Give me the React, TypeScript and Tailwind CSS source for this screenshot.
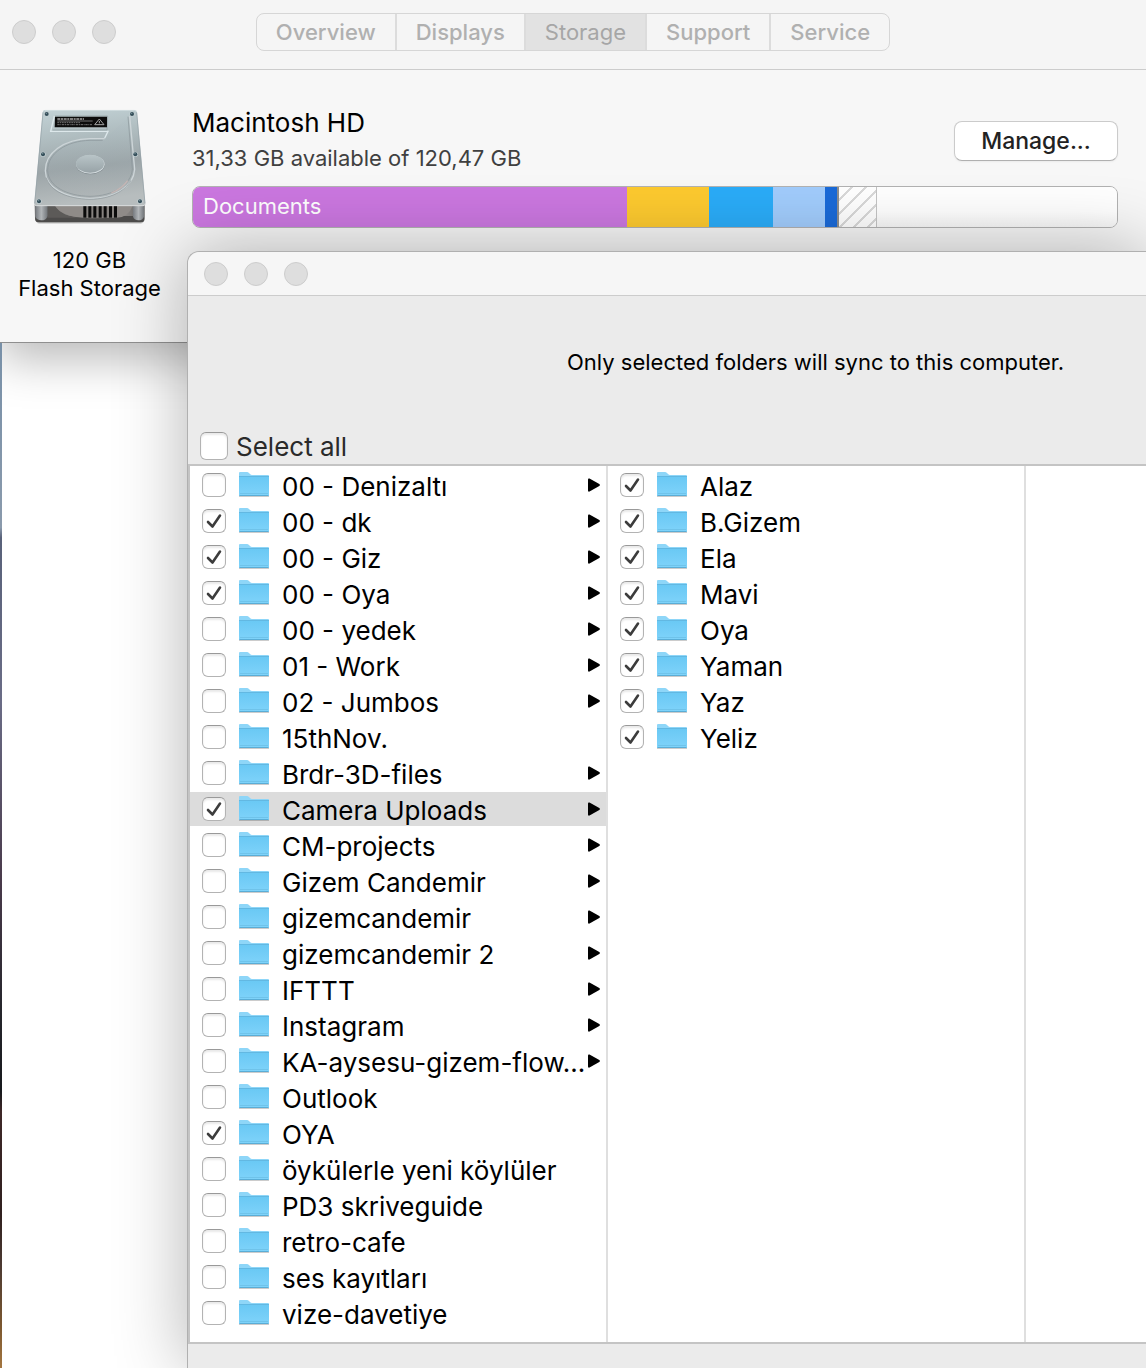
import { useState } from "react";

type Folder = { name: string; checked?: boolean; leaf?: boolean };

const tabs = ["Overview", "Displays", "Storage", "Support", "Service"];

const folders: Folder[] = [
  { name: "00 - Denizaltı" },
  { name: "00 - dk", checked: true },
  { name: "00 - Giz", checked: true },
  { name: "00 - Oya", checked: true },
  { name: "00 - yedek" },
  { name: "01 - Work" },
  { name: "02 - Jumbos" },
  { name: "15thNov.", leaf: true },
  { name: "Brdr-3D-files" },
  { name: "Camera Uploads", checked: true },
  { name: "CM-projects" },
  { name: "Gizem Candemir" },
  { name: "gizemcandemir" },
  { name: "gizemcandemir 2" },
  { name: "IFTTT" },
  { name: "Instagram" },
  { name: "KA-aysesu-gizem-flow..." },
  { name: "Outlook", leaf: true },
  { name: "OYA", checked: true, leaf: true },
  { name: "öykülerle yeni köylüler", leaf: true },
  { name: "PD3 skriveguide", leaf: true },
  { name: "retro-cafe", leaf: true },
  { name: "ses kayıtları", leaf: true },
  { name: "vize-davetiye", leaf: true },
];

const subfolders: Folder[] = ["Alaz", "B.Gizem", "Ela", "Mavi", "Oya", "Yaman", "Yaz", "Yeliz"].map(
  (name) => ({ name, checked: true, leaf: true }),
);

const usage = [
  { share: 434, look: "bg-[#cb77e0]", label: "Documents" },
  { share: 82, look: "bg-[#fdca2f]" },
  { share: 64, look: "bg-[#2aacf8]" },
  { share: 52, look: "bg-[#a1ccfc]" },
  { share: 12, look: "bg-[#1a6ad8] border-r-2 border-[#8e8e8e]" },
  {
    share: 37,
    look: "border-r border-[#c4c4c4] bg-[repeating-linear-gradient(135deg,#fff_0px,#fff_8px,#d9d9d9_8px,#d9d9d9_10px)]",
  },
  { share: 240, look: "bg-linear-to-b from-white from-60% to-[#f8f8f8]" },
];

function WindowButtons() {
  return (
    <div className="flex gap-4">
      {["Close", "Minimize", "Zoom"].map((label) => (
        <button
          key={label}
          aria-label={label}
          className="size-6 rounded-full border border-[#cdcdcd] bg-[#dedede]"
        />
      ))}
    </div>
  );
}

function DiskIcon() {
  return (
    <svg viewBox="90 48 360 360" className="size-[120px]" aria-hidden="true">
      <defs>
        <linearGradient id="lid" x1="0" y1="0" x2="0.15" y2="1">
          <stop offset="0" stopColor="#c3d3d7" />
          <stop offset="0.35" stopColor="#aebbbe" />
          <stop offset="0.65" stopColor="#9ca5a8" />
          <stop offset="1" stopColor="#b7bdbe" />
        </linearGradient>
        <linearGradient id="platter" x1="0" y1="0" x2="0" y2="1">
          <stop offset="0" stopColor="#b4c4c8" />
          <stop offset="0.6" stopColor="#9ba6aa" />
          <stop offset="1" stopColor="#aab0b2" />
        </linearGradient>
        <linearGradient id="base" x1="0" y1="0" x2="1" y2="0">
          <stop offset="0" stopColor="#6a6a6a" />
          <stop offset="0.3" stopColor="#767472" />
          <stop offset="0.45" stopColor="#a39f9c" />
          <stop offset="0.85" stopColor="#858280" />
          <stop offset="1" stopColor="#5a5a5a" />
        </linearGradient>
        <linearGradient id="post" x1="0" y1="0" x2="1" y2="0">
          <stop offset="0" stopColor="#777b80" />
          <stop offset="0.5" stopColor="#b1b5b8" />
          <stop offset="1" stopColor="#74787c" />
        </linearGradient>
        <linearGradient id="hub" x1="0" y1="0" x2="0" y2="1">
          <stop offset="0" stopColor="#b9c5c8" />
          <stop offset="1" stopColor="#98a3a7" />
        </linearGradient>
      </defs>
      <path d="M108 392 Q110 402 122 402 H416 Q430 402 432 392Z" fill="#000" opacity=".12" />
      <path d="M104 345 H434 V386 Q434 397 422 397 H117 Q105 397 105 386Z" fill="url(#base)" />
      <path d="M107 378 H432 V387 Q432 397 422 397 H117 Q107 397 106 387Z" fill="#4c4b4a" />
      <path d="M142 347 H165 Q185 378 235 383 H142Z" fill="#5c5a58" />
      <path d="M165 347 Q185 380 250 383 H350 Q385 382 398 347Z" fill="#8f8b88" />
      <path d="M106 347 H142 V380 Q138 391 124 391 Q110 390 106 380Z" fill="url(#post)" />
      <path d="M399 347 H432 V380 Q428 391 415 391 Q402 390 399 380Z" fill="url(#post)" />
      <path d="M250 347 H351 V381 Q300 387 250 383Z" fill="#86827f" />
      {[250, 265, 280, 296, 311, 327, 342].map((x) => (
        <path key={x} d={`M${x} 347 h9 v36 h-9Z`} fill="#0b0b0b" />
      ))}
      <path d="M135 60 H403 Q410 60 411 67 L436 340 Q436 348 429 348 H109 Q102 348 103 340 L128 67 Q129 60 135 60Z" fill="url(#lid)" />
      <path d="M135 61 H403 Q409 61 410 67" fill="none" stroke="#dce7ea" strokeWidth="2" />
      <path d="M104 343 Q105 347 110 347 H429 Q434 347 435 343" fill="none" stroke="#d9dcdd" strokeWidth="3" />
      <path d="M129 67 L104 340" fill="none" stroke="#93a0a6" strokeWidth="2" />
      <path d="M410 67 L435 340" fill="none" stroke="#93a0a6" strokeWidth="2" />
      <path d="M163 78 L152 124 H324 L314 145" fill="none" stroke="#dde8eb" strokeWidth="4" />
      <path d="M165 78 H323 L321 120 H158" fill="none" stroke="#8f9da1" strokeWidth="2" />
      <path
        d="M314 146 H270 C190 148 136 189 136 242 C137 294 196 324 270 326 C346 324 400 290 404 238 L389 78"
        fill="url(#platter)"
        fillOpacity=".4"
        stroke="#cdd5d8"
        strokeWidth="4"
      />
      <path
        d="M308 151 H270 C197 153 143 191 143 241 C144 289 201 318 270 319 C340 318 394 285 397 237 L384 80"
        fill="none"
        stroke="#899498"
        strokeWidth="2"
      />
      <path d="M139 263 C151 304 202 326 270 328 C332 327 376 303 393 271" fill="none" stroke="#8c9599" strokeWidth="2" />
      <path d="M334 309 Q365 297 383 272" fill="none" stroke="#c6b6b5" strokeWidth="4" />
      <ellipse cx="271" cy="225" rx="43" ry="28" fill="#7e888c" />
      <ellipse cx="271" cy="223" rx="43" ry="28" fill="#d2dadd" />
      <ellipse cx="270" cy="221" rx="42" ry="27" fill="url(#hub)" />
      <path d="M165 80 H321 V112 H164Z" fill="#0c0c0c" />
      <g stroke="#a4a4a4" fill="none">
        <path d="M172 87 H252" strokeWidth="4" strokeDasharray="9 2 6 2" />
        <path d="M172 93 H278" strokeWidth="2" />
        <path d="M172 98 H240" strokeWidth="2" strokeDasharray="5 2" />
        <path d="M172 104 H276" strokeWidth="2" strokeDasharray="7 2 3 2" />
        <path d="M298 87 L312 104 H284Z M298 93 V99 M298 101 V103" strokeWidth="3" />
      </g>
      {[
        [140, 72],
        [396, 72],
        [129, 193],
        [406, 193],
        [117, 334],
        [420, 334],
      ].map(([x, y]) => (
        <g key={`${x}-${y}`}>
          <circle cx={x} cy={y} r="8" fill="#c3cfd2" />
          <circle cx={x} cy={y} r="6" fill="#344e59" />
          <circle cx={x - 1} cy={y - 2} r="2" fill="#7f979f" />
        </g>
      ))}
    </svg>
  );
}

function FolderIcon() {
  return (
    <svg viewBox="0 0 32 28" className="h-7 w-8 shrink-0" aria-hidden="true">
      <defs>
        <linearGradient id="folder" x1="0" y1="0" x2="0" y2="1">
          <stop offset="0" stopColor="#69c8f4" />
          <stop offset="1" stopColor="#7fd3fa" />
        </linearGradient>
      </defs>
      <path d="M1 25.500H31" stroke="#000" strokeOpacity=".2" />
      <path d="M1 2 Q1 1 2 1 H9 Q10 1 11 2 L12 3 Q13 4 14 4 H30 Q31 4 31 5 V24 Q31 25 30 25 H2 Q1 25 1 24Z" fill="#8ed6f8" />
      <path d="M1 5 H31 V24 Q31 25 30 25 H2 Q1 25 1 24Z" fill="url(#folder)" />
      <path d="M1 5.500H31" stroke="#62b8e2" />
      <path d="M2 22.500H30" stroke="#6fc3ea" />
      <path d="M1.500 24.500H30.500" stroke="#5aadd6" />
    </svg>
  );
}

function CheckBox({ id, initial = false, large = false }: { id: string; initial?: boolean; large?: boolean }) {
  const [on, setOn] = useState(initial);
  return (
    <span className="grid shrink-0 place-items-center">
      <input
        id={id}
        type="checkbox"
        checked={on}
        onChange={() => setOn(!on)}
        className={`peer col-start-1 row-start-1 appearance-none rounded-md border border-[#b3b3b3] border-t-[#999] bg-white shadow-[inset_0_2px_2px_#e9e9e9] ${
          large ? "size-7" : "size-6"
        }`}
      />
      <svg
        viewBox="0 0 24 24"
        className="pointer-events-none invisible col-start-1 row-start-1 size-6 peer-checked:visible"
        fill="none"
        stroke="#3c3c3c"
        strokeWidth="2.600"
        strokeLinecap="round"
        strokeLinejoin="round"
        aria-hidden="true"
      >
        <path d="M6 13L10.500 17.500L18 6.500" />
      </svg>
    </span>
  );
}

function FolderColumn({ items, prefix, selected }: { items: Folder[]; prefix: string; selected?: string }) {
  return (
    <ul className="flex w-[418px] shrink-0 flex-col gap-0.5 border-r-2 border-[#dfdfdf] pt-0.5">
      {items.map((item, i) => (
        <li
          key={item.name}
          className={`flex h-[34px] items-center pr-1.5 pl-3 ${item.name === selected ? "bg-[#dcdcdc]" : ""}`}
        >
          <CheckBox id={`${prefix}-${i}`} initial={item.checked} />
          <label htmlFor={`${prefix}-${i}`} className="flex min-w-0 flex-1 items-center gap-3 pl-3">
            <FolderIcon />
            <span className="pt-1 text-[26px] leading-[30px] whitespace-nowrap">{item.name}</span>
          </label>
          {!item.leaf && (
            <svg viewBox="0 0 12 14" className="h-3.5 w-3 shrink-0" aria-hidden="true">
              <path d="M0 1.500 Q0 0 1.500 .5 L11.300 6 Q12.500 7 11.300 8 L1.500 13.500 Q0 14 0 12.500Z" />
            </svg>
          )}
        </li>
      ))}
    </ul>
  );
}

export default function App() {
  return (
    <main className="flex min-h-screen flex-col overflow-hidden bg-white font-['Inter',sans-serif] text-black">
      <section className="relative border-b border-[#8f8f8f] bg-[#f7f7f7] shadow-[0_16px_44px_rgba(0,0,0,0.28)]">
        <header className="flex h-[70px] items-center border-b border-[#cccccc] bg-[#f5f5f5] px-3 pb-[5px]">
          <div className="flex-1">
            <WindowButtons />
          </div>
          <nav className="flex h-[38px] overflow-hidden rounded-lg border border-[#d6d6d6] text-[22px] text-[#b0b0b0]">
            {tabs.map((tab) => (
              <button
                key={tab}
                className={`border-r-2 border-[#dcdcdc] px-[19px] last:border-r-0 ${
                  tab === "Storage" ? "bg-[#e2e2e2] text-[#a6a6a6]" : "font-medium"
                }`}
              >
                {tab}
              </button>
            ))}
          </nav>
          <div className="flex-1" />
        </header>
        <div className="flex h-[272px] pt-9 pr-7">
          <div className="flex w-[179px] shrink-0 flex-col items-center text-center text-[22px] leading-7">
            <DiskIcon />
            <p className="pt-5">
              120 GB
              <br />
              Flash Storage
            </p>
          </div>
          <div className="min-w-0 flex-1 pl-[13px]">
            <div className="flex items-start justify-between">
              <div>
                <h1 className="text-[26px] leading-[34px]">Macintosh HD</h1>
                <p className="pt-0.5 text-[22px] leading-8 text-[#404040]">31,33 GB available of 120,47 GB</p>
              </div>
              <button className="mt-[15px] h-10 w-[164px] rounded-lg border border-[#cbcbcb] border-b-[#b0b0b0] bg-white text-[23px] leading-8 font-medium text-[#222] shadow-xs">
                Manage...
              </button>
            </div>
            <div className="mt-3 flex h-[42px] overflow-hidden rounded-lg border border-[#b2b2b2]">
              {usage.map((part, i) => (
                <div
                  key={i}
                  className={`flex basis-0 items-center text-[22px] text-white ${part.look}`}
                  style={{ flexGrow: part.share }}
                >
                  {part.label && <span className="pb-0.5 pl-2.5">{part.label}</span>}
                </div>
              ))}
            </div>
          </div>
        </div>
      </section>

      <div className="flex flex-1">
        <div className="relative w-0.5 shrink-0 bg-[linear-gradient(#7890a8_0%,#8a9aac_18%,#59627a_19%,#6a6c86_35%,#4a3b4c_52%,#26262c_65%,#17191d_73%,#3e2828_75%,#30201f_85%,#4c3a32_90%,#7c5830_96%,#a47640_100%)]" />
        <section className="relative -mt-[92px] ml-[185px] flex min-w-0 flex-1 flex-col rounded-tl-xl border-t border-l border-[#b0b0b0] bg-[#ebebeb] shadow-[0_0_72px_rgba(0,0,0,0.3)]">
          <header className="flex h-[44px] items-center rounded-tl-xl border-b border-[#cccccc] bg-[#f6f6f6] pl-4">
            <WindowButtons />
          </header>
          <div className="flex h-[168px] flex-col justify-between pt-[52px]">
            <p className="pl-[379px] text-[22px] leading-7 whitespace-nowrap">
              Only selected folders will sync to this computer.
            </p>
            <div className="flex items-center gap-2 pb-1 pl-3">
              <CheckBox id="select-all" large />
              <label htmlFor="select-all" className="pt-0.5 text-[26px] leading-[26px] text-[#2a2a2a]">
                Select all
              </label>
            </div>
          </div>
          <div className="flex h-[880px] overflow-hidden border-y-2 border-l-2 border-[#c4c4c4] bg-white">
            <FolderColumn items={folders} prefix="folder" selected="Camera Uploads" />
            <FolderColumn items={subfolders} prefix="subfolder" />
          </div>
        </section>
      </div>
    </main>
  );
}
